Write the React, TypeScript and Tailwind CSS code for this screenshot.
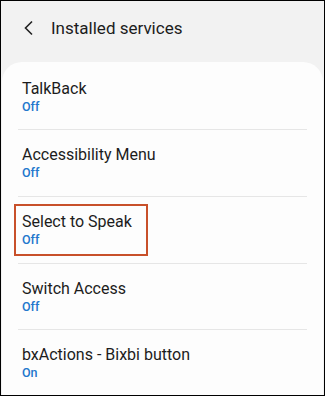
import React from "react";

const items = [
  { name: "TalkBack", status: "Off" },
  { name: "Accessibility Menu", status: "Off" },
  { name: "Select to Speak", status: "Off", highlight: true },
  { name: "Switch Access", status: "Off" },
  { name: "bxActions - Bixbi button", status: "On" },
];

export default function App() {
  return (
    <div
      className="w-[325px] h-[396px] overflow-hidden border border-black bg-[#f2f2f2] flex flex-col"
      style={{ fontFamily: "Roboto, 'Noto Sans', sans-serif" }}
    >
      <div className="h-[61px] shrink-0 flex items-center pl-[22px] pb-[7px]">
        <svg width="12" height="16" viewBox="0 0 12 16" className="-mt-[1px]">
          <path d="M9 1.5 L2.5 8 L9 14.5" fill="none" stroke="#222" strokeWidth="1.6" />
        </svg>
        <span className="ml-[16px] text-[17px] leading-[22px] text-[#1c1c1c]">Installed services</span>
      </div>
      <div className="flex-1 mx-[1px] bg-[#fdfdfd] rounded-t-[20px] pt-[1.5px]">
        {items.map((it, i) => (
          <div key={it.name}>
            {i > 0 && <div className="mx-[16px] h-[1px] bg-[#e6e6e6]" />}
            <div className="px-[12px] pt-[15px] pb-[14.7px]">
              {it.highlight ? (
                <div className="w-[134px] border-2 border-[#c8502a] -mt-[8px] -mb-[8px] pt-[6px] pb-[6px] pl-[6px]">
                  <div className="text-[16px] leading-[20px] text-[#1c1c1c]">{it.name}</div>
                  <div className="text-[12.5px] leading-[16px] font-medium text-[#2277cc]">{it.status}</div>
                </div>
              ) : (
                <div className="pl-[8px]">
                  <div className="text-[16px] leading-[20px] text-[#1c1c1c]">{it.name}</div>
                  <div className="text-[12.5px] leading-[16px] font-medium text-[#2277cc]">{it.status}</div>
                </div>
              )}
            </div>
          </div>
        ))}
      </div>
    </div>
  );
}
